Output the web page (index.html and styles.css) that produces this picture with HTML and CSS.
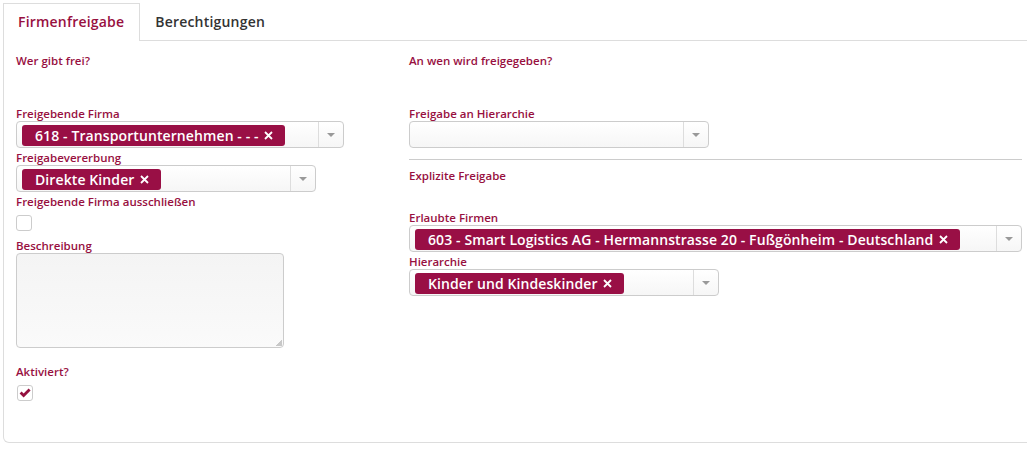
FILE: index.html
```html
<!DOCTYPE html>
<html>
<head>
    <title>Firmenfreigabe</title>
    <link rel="stylesheet" href="styles.css">
</head>
<body>
    <div class="tabs">
        <div class="tab active">Firmenfreigabe</div>
        <div class="tab">Berechtigungen</div>
    </div>
    <div class="panel">
        <div class="column left">
            <div class="heading">Wer gibt frei?</div>

            <label class="label">Freigebende Firma</label>
            <div class="select w-firma">
                <div class="tags"><span class="tag">618 - Transportunternehmen - - - <svg class="x" width="9" height="9" viewBox="0 0 9 9"><path d="M1 1 L8 8 M8 1 L1 8" stroke="#fff" stroke-width="1.8"/></svg></span></div>
                <div class="arrow"><span></span></div>
            </div>

            <label class="label">Freigabevererbung</label>
            <div class="select w-erbung">
                <div class="tags"><span class="tag">Direkte Kinder <svg class="x" width="9" height="9" viewBox="0 0 9 9"><path d="M1 1 L8 8 M8 1 L1 8" stroke="#fff" stroke-width="1.8"/></svg></span></div>
                <div class="arrow"><span></span></div>
            </div>

            <label class="label">Freigebende Firma ausschließen</label>
            <div class="checkbox"></div>

            <label class="label gap-desc">Beschreibung</label>
            <textarea class="textarea"></textarea>

            <label class="label gap-active">Aktiviert?</label>
            <div class="checkbox checked">
                <svg width="12" height="10" viewBox="0 0 12 10"><path d="M0.6 5.6 L2.6 3.6 L4.6 5.6 L9.6 0.6 L11.6 2.6 L4.6 9.6 Z" fill="#94103f"/></svg>
            </div>
        </div>

        <div class="column right">
            <div class="heading">An wen wird freigegeben?</div>

            <label class="label">Freigabe an Hierarchie</label>
            <div class="select w-hier-empty">
                <div class="tags"></div>
                <div class="arrow"><span></span></div>
            </div>

            <div class="divider"></div>
            <div class="subheading">Explizite Freigabe</div>

            <label class="label">Erlaubte Firmen</label>
            <div class="select w-erlaubt">
                <div class="tags"><span class="tag">603 - Smart Logistics AG - Hermannstrasse 20 - Fußgönheim - Deutschland <svg class="x" width="9" height="9" viewBox="0 0 9 9"><path d="M1 1 L8 8 M8 1 L1 8" stroke="#fff" stroke-width="1.8"/></svg></span></div>
                <div class="arrow"><span></span></div>
            </div>

            <label class="label">Hierarchie</label>
            <div class="select w-hier">
                <div class="tags"><span class="tag">Kinder und Kindeskinder <svg class="x" width="9" height="9" viewBox="0 0 9 9"><path d="M1 1 L8 8 M8 1 L1 8" stroke="#fff" stroke-width="1.8"/></svg></span></div>
                <div class="arrow"><span></span></div>
            </div>
        </div>
    </div>
</body>
</html>
```
FILE: styles.css
```css
body {
    margin: 0;
    padding: 3px 0 0 3px;
    font-family: "Open Sans", Arial, sans-serif;
    background: #fff;
    overflow: hidden;
}
.tabs {
    display: flex;
    border-bottom: 1px solid #ddd;
    margin-right: -10px;
}
.tab {
    height: 36px;
    line-height: 36px;
    padding: 0 15px 0 14px;
    font-size: 14px;
    font-weight: 600;
    letter-spacing: 0.2px;
    color: #333;
    border: 1px solid transparent;
    border-bottom: none;
    margin-bottom: -1px;
}
.tab.active {
    color: #98103f;
    border-color: #ddd;
    background: #fff;
    height: 37px;
}
.panel {
    display: grid;
    grid-template-columns: 393px 613px;
    height: 402px;
    width: 1040px;
    box-sizing: border-box;
    border: 1px solid #ddd;
    border-top: none;
    border-bottom-left-radius: 6px;
    padding-left: 12px;
}
.column {
    display: flex;
    flex-direction: column;
    align-items: flex-start;
}
.heading, .subheading, .label {
    color: #98103f;
    font-size: 11.5px;
    font-weight: 600;
    line-height: 14px;
}
.heading {
    margin-top: 13px;
    height: 50px;
}
.label {
    margin-top: 3px;
    height: 14px;
}
.select {
    display: flex;
    box-sizing: border-box;
    height: 27px;
    border: 1px solid #ccc;
    border-radius: 4px;
    background: linear-gradient(#fff, #f6f6f6);
}
.tags {
    flex: 1;
    padding: 2px 0 0 5px;
}
.tag {
    display: inline-flex;
    align-items: center;
    height: 21px;
    padding: 0 12px 0 13px;
    border-radius: 3px;
    background: #990f45;
    color: #fff;
    font-size: 14px;
    font-weight: 600;
    letter-spacing: 0.1px;
    white-space: pre;
}
.tag .x {
    margin-left: 2px;
}
.arrow {
    width: 24px;
    border-left: 1px solid #ddd;
    display: flex;
    align-items: center;
    justify-content: center;
}
.arrow span {
    border-left: 4px solid transparent;
    border-right: 4px solid transparent;
    border-top: 4px solid #999;
}
.w-firma { width: 328px; }
.w-erbung { width: 300px; }
.w-hier-empty { width: 300px; }
.w-erlaubt { width: 613px; }
.w-hier { width: 310px; }
.checkbox {
    width: 16px;
    height: 16px;
    box-sizing: border-box;
    border: 1px solid #ccc;
    border-radius: 3px;
    margin-top: 6px;
    display: flex;
    align-items: center;
    justify-content: center;
}
.checked { margin-left: 1px; }
.gap-desc { margin-top: 8px; }
.gap-active { margin-top: 17px; }
.textarea {
    width: 268px;
    height: 95px;
    box-sizing: border-box;
    border: 1px solid #ccc;
    border-radius: 4px;
    background:
        linear-gradient(135deg, transparent 50%, #c8c8c8 50%) right 1px bottom 1px / 6px 6px no-repeat,
        linear-gradient(#f4f4f4, #fafafa);
    margin: 0;
    resize: none;
}
.divider {
    width: 613px;
    border-top: 1px solid #ccc;
    margin-top: 11px;
}
.subheading {
    margin-top: 9px;
    height: 39px;
}
```
